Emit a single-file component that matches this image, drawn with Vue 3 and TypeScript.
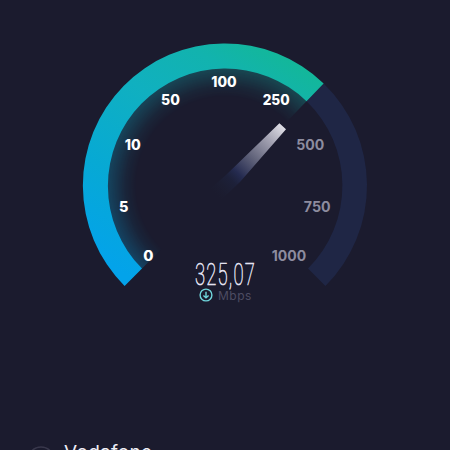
<script setup lang="ts">
interface Mark {
  value: string
  x: number
  y: number
  width: number
  dim?: boolean
}

const marks: Mark[] = [
  { value: '0', x: 148.3, y: 261.2, width: 10.2 },
  { value: '5', x: 123.6, y: 212.2, width: 9.4 },
  { value: '10', x: 132.7, y: 150.2, width: 16 },
  { value: '50', x: 170.5, y: 104.8, width: 18.8 },
  { value: '100', x: 224, y: 87.2, width: 25.4 },
  { value: '250', x: 276.2, y: 105.2, width: 27 },
  { value: '500', x: 310.3, y: 150.2, width: 28 },
  { value: '750', x: 317.2, y: 212.2, width: 26.8 },
  { value: '1000', x: 289, y: 261.2, width: 34.4 },
].map((mark, i) => ({ ...mark, dim: i > 5 }))

const cx = 225
const cy = 185.6

function point(r: number, deg: number): string {
  const a = (deg * Math.PI) / 180
  return `${(cx + r * Math.sin(a)).toFixed(2)} ${(cy - r * Math.cos(a)).toFixed(2)}`
}

// Angles are measured clockwise from the top of the dial.
function band(inner: number, outer: number, from: number, to: number): string {
  const large = to - from > 180 ? 1 : 0
  return `M${point(outer, from)}A${outer} ${outer} 0 ${large} 1 ${point(outer, to)}L${point(inner, to)}A${inner} ${inner} 0 ${large} 0 ${point(inner, from)}Z`
}

const track = band(117.4, 142, 44, 135)
const progress = band(117.4, 142, -135, 44)
const glow = band(84, 118, -135, 44)
</script>

<template>
  <main class="screen">
    <section class="dial">
      <svg class="gauge" viewBox="0 0 450 300" width="450" height="300">
        <defs>
          <linearGradient id="speed" gradientUnits="userSpaceOnUse" x1="150" y1="290" x2="290" y2="60">
            <stop offset="0" stop-color="#03a3ea" />
            <stop offset="0.3" stop-color="#07a9d4" />
            <stop offset="0.62" stop-color="#10b0c0" />
            <stop offset="0.85" stop-color="#12b3ae" />
            <stop offset="1" stop-color="#13b79a" />
          </linearGradient>
          <radialGradient id="fade" gradientUnits="userSpaceOnUse" :cx="cx" :cy="cy" r="118">
            <stop offset="0.75" stop-color="#fff" stop-opacity="0" />
            <stop offset="0.84" stop-color="#fff" stop-opacity="0.07" />
            <stop offset="0.93" stop-color="#fff" stop-opacity="0.2" />
            <stop offset="1" stop-color="#fff" stop-opacity="0.3" />
          </radialGradient>
          <mask id="glow-mask" maskUnits="userSpaceOnUse" x="0" y="0" width="450" height="300">
            <rect width="450" height="300" fill="url(#fade)" />
          </mask>
          <linearGradient id="needle" gradientUnits="userSpaceOnUse" x1="216" y1="194" x2="282" y2="126">
            <stop offset="0" stop-color="#1e2639" stop-opacity="0" />
            <stop offset="0.22" stop-color="#20294a" stop-opacity="0.4" />
            <stop offset="0.32" stop-color="#252b50" />
            <stop offset="0.55" stop-color="#62647b" />
            <stop offset="0.8" stop-color="#a3a2b2" />
            <stop offset="1" stop-color="#dedde5" />
          </linearGradient>
        </defs>
        <path :d="track" fill="#1f2645" />
        <path :d="glow" fill="url(#speed)" mask="url(#glow-mask)" />
        <path :d="progress" fill="url(#speed)" />
        <path d="M279.4 123.2L286 129.2L240 182L219 202L208 191L227 174Z" fill="url(#needle)" />
        <text
          v-for="mark in marks"
          :key="mark.value"
          class="mark"
          :class="{ dim: mark.dim }"
          :x="mark.x - mark.width / 2"
          :y="mark.y"
          :textLength="mark.width"
          lengthAdjust="spacingAndGlyphs"
        >{{ mark.value }}</text>
        <text class="speed" x="195" y="285.2" textLength="61" lengthAdjust="spacingAndGlyphs">325,07</text>
      </svg>
      <div class="unit">
        <svg viewBox="0 0 14 14" width="14" height="14">
          <circle cx="7" cy="7" r="5.9" />
          <path d="M7 3.8V9.8M4.4 7.4L7 9.9L9.6 7.4" />
        </svg>
        <span>Mbps</span>
      </div>
    </section>
    <footer class="provider">
      <svg viewBox="0 0 28 28" width="28" height="28"><circle cx="14" cy="14" r="13" /></svg>
      <span>Vodafone</span>
    </footer>
  </main>
</template>

<style>
body {
  background: #1b1b2e;
  overflow: hidden;
}
</style>

<style scoped>
.screen {
  width: 450px;
  height: 450px;
  overflow: hidden;
  background: #1b1b2e;
  font-family: Inter, "Open Sans", sans-serif;
}
.dial {
  height: 441px;
}
.gauge {
  display: block;
  margin-bottom: -12px;
}
.mark {
  font-family: Inter, "Open Sans", sans-serif;
  font-size: 14.2px;
  font-weight: 800;
  fill: #fff;
}
.mark.dim {
  fill: #8d8c9f;
  font-weight: 700;
}
.speed {
  font-family: Roboto, sans-serif;
  font-size: 31px;
  font-weight: 100;
  letter-spacing: 2px;
  fill: #f0eefc;
  stroke: #e8e6f6;
  stroke-width: 0.6px;
}
.unit {
  display: flex;
  align-items: center;
  gap: 5px;
  height: 14px;
  padding-left: 199px;
  color: #4d4c62;
  font-size: 12px;
  letter-spacing: 0.5px;
}
.unit svg {
  fill: none;
  stroke: #70d6dc;
  stroke-width: 1.4;
}
.provider {
  display: flex;
  align-items: flex-start;
  gap: 9px;
  padding-left: 27px;
  color: #eeedf5;
  font-size: 19px;
  line-height: 23px;
  font-weight: 400;
  letter-spacing: 0.3px;
}
.provider svg {
  margin-top: 5px;
  fill: none;
  stroke: #38374b;
  stroke-width: 1.5;
}
</style>
